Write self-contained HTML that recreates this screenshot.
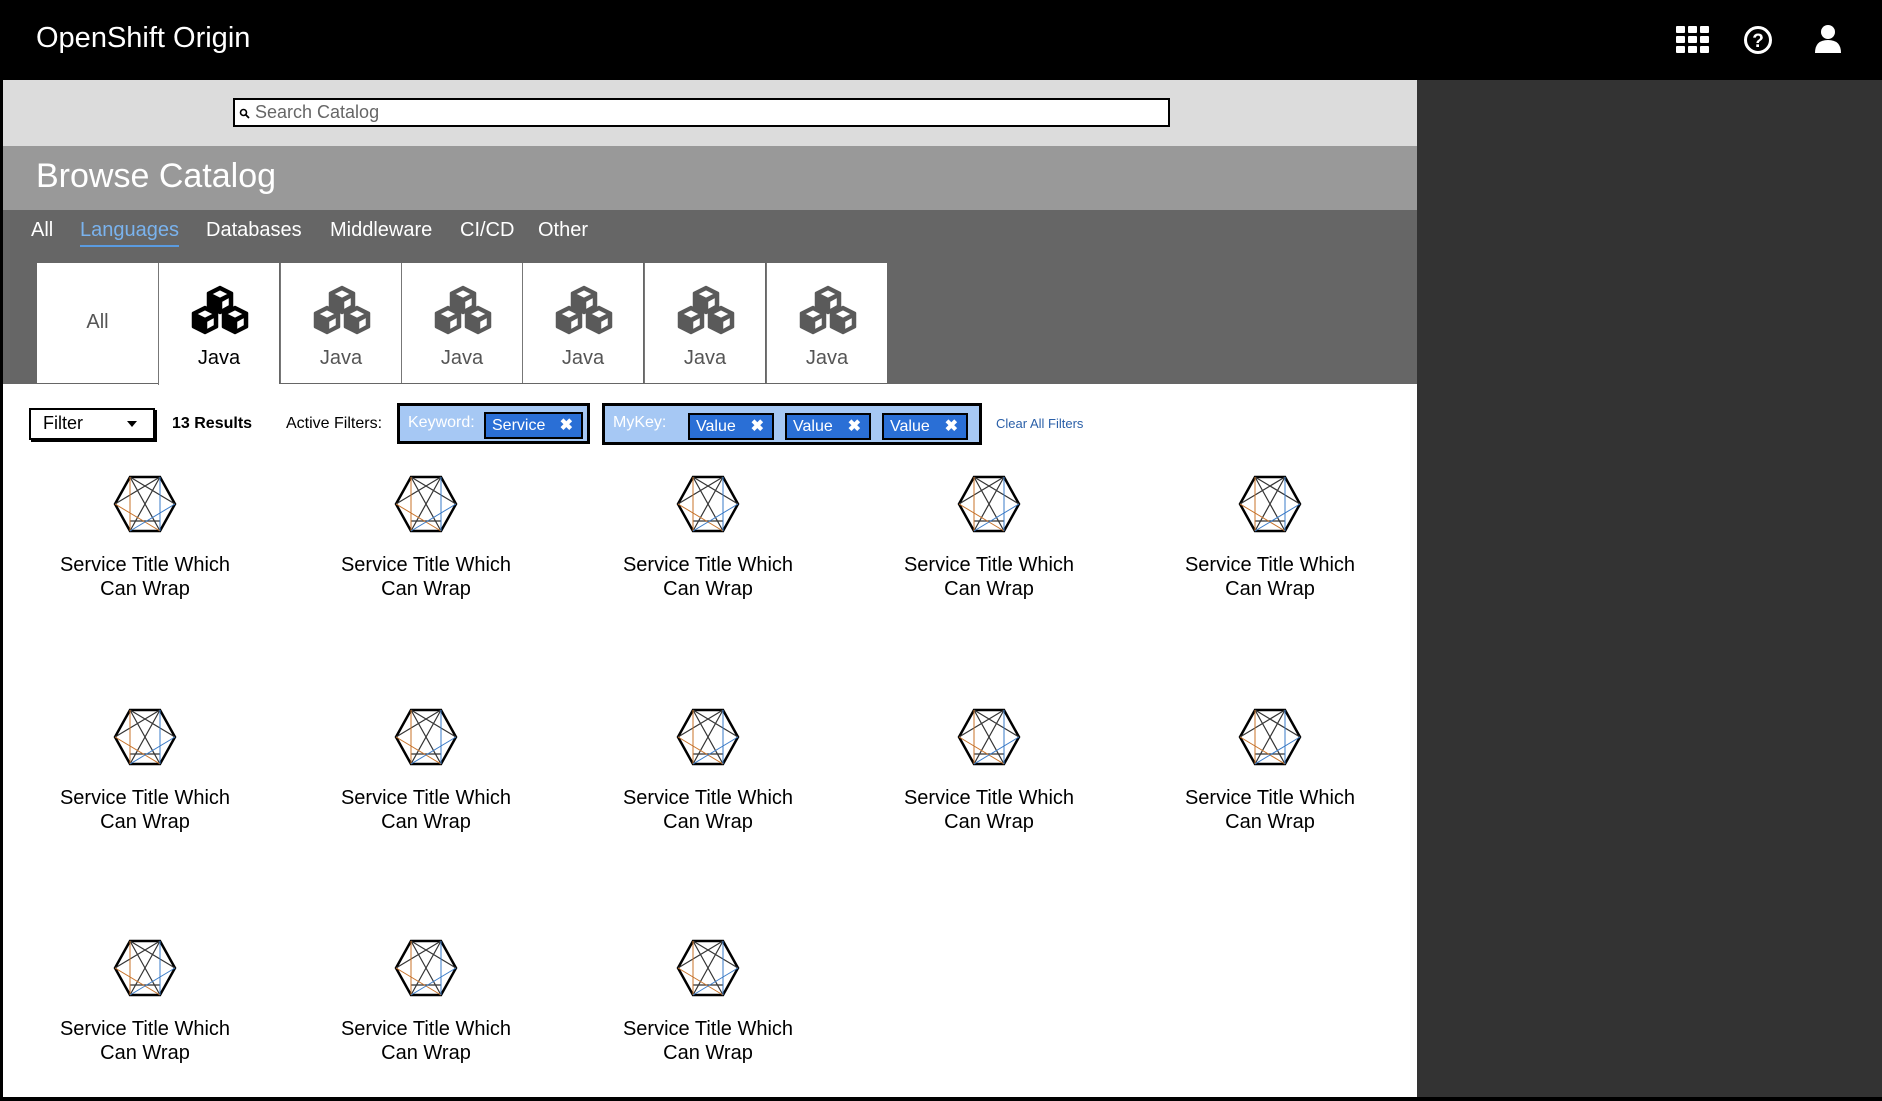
<!DOCTYPE html>
<html><head><meta charset="utf-8"><style>
*{margin:0;padding:0;box-sizing:border-box}
body{width:1882px;height:1101px;background:#000;position:relative;overflow:hidden;font-family:"Liberation Sans",sans-serif}
.a{position:absolute}
.t{color:#fff;font-size:20px;top:219px}
.tile{position:absolute;top:263px;width:121px;height:120px;background:#fff;border-left:1px solid #777;text-align:center;font-size:20px;color:#555}
.tile svg{position:absolute;left:30px;top:22px}
.tile span{position:absolute;left:0;right:0;top:84px}
.card{position:absolute;width:240px;text-align:center;font-size:20px;line-height:24px;color:#000}
.card svg{display:block;margin:0 auto 20px}
.chip{position:absolute;top:412px;height:27px;background:#2a6fd6;border:2px solid #000;color:#fff;font-size:16px;line-height:23px;padding-left:6px}
.chip b{position:absolute;right:8px;top:0;font-size:16px}
</style></head><body>
<div class="a" style="left:36px;top:22px;color:#fff;font-size:29px">OpenShift Origin</div>
<svg class="a" style="left:1676px;top:26px" width="34" height="28"><g fill="#fff"><rect x="0" y="0" width="9" height="7" rx="1"/><rect x="12" y="0" width="9" height="7" rx="1"/><rect x="24" y="0" width="9" height="7" rx="1"/><rect x="0" y="10" width="9" height="7" rx="1"/><rect x="12" y="10" width="9" height="7" rx="1"/><rect x="24" y="10" width="9" height="7" rx="1"/><rect x="0" y="20" width="9" height="7" rx="1"/><rect x="12" y="20" width="9" height="7" rx="1"/><rect x="24" y="20" width="9" height="7" rx="1"/></g></svg>
<svg class="a" style="left:1743px;top:25px" width="30" height="30"><circle cx="15" cy="15" r="12.5" fill="none" stroke="#fff" stroke-width="3"/><text x="15" y="22" text-anchor="middle" fill="#fff" font-size="19" font-weight="bold" font-family="Liberation Sans">?</text></svg>
<svg class="a" style="left:1814px;top:24px" width="28" height="30"><circle cx="14" cy="8" r="7" fill="#fff"/><path d="M1 29 Q1 16 14 16 Q27 16 27 29 Z" fill="#fff"/></svg>
<div class="a" style="left:1417px;top:80px;width:465px;height:1017px;background:#333"></div>
<div class="a" style="left:3px;top:80px;width:1414px;height:1017px;background:#fff"></div>
<div class="a" style="left:3px;top:80px;width:1414px;height:66px;background:#dcdcdc"></div>
<div class="a" style="left:233px;top:98px;width:937px;height:29px;background:#fff;border:2px solid #000;font-size:18px;color:#666;line-height:24px;padding-left:20px">Search Catalog</div>
<svg class="a" style="left:239px;top:108px" width="11" height="11"><circle cx="4.5" cy="4.5" r="3" fill="none" stroke="#000" stroke-width="1.6"/><path d="M6.5 6.5 L10 10" stroke="#000" stroke-width="1.8"/></svg>
<div class="a" style="left:3px;top:146px;width:1414px;height:64px;background:#999"></div>
<div class="a" style="left:36px;top:157px;color:#fff;font-size:34px">Browse Catalog</div>
<div class="a" style="left:3px;top:210px;width:1414px;height:174px;background:#666"></div>
<div class="a t" style="left:31px">All</div>
<div class="a t" style="left:80px;color:#7ab3ee;border-bottom:2px solid #5a9be0;padding-bottom:3px">Languages</div>
<div class="a t" style="left:206px">Databases</div>
<div class="a t" style="left:330px">Middleware</div>
<div class="a t" style="left:460px">CI/CD</div>
<div class="a t" style="left:538px">Other</div>
<div class="tile" style="left:37px;border-left:none"><span style="top:48px">All</span></div>
<div id="tiles"></div>
<div class="a" style="left:29px;top:408px;width:126px;height:32px;border:2px solid #000;box-shadow:2px 2px 0 #000;font-size:18px;line-height:27px;padding-left:12px">Filter</div>
<div class="a" style="left:127px;top:421px;width:0;height:0;border-left:5px solid transparent;border-right:5px solid transparent;border-top:6px solid #000"></div>
<div class="a" style="left:172px;top:415px;font-size:16px;font-weight:bold">13 Results</div>
<div class="a" style="left:286px;top:415px;font-size:16px">Active Filters:</div>
<div class="a" style="left:397px;top:403px;width:193px;height:41px;background:#a6c8f4;border:3px solid #000"></div>
<div class="a" style="left:408px;top:414px;font-size:16px;color:#fff">Keyword:</div>
<div class="chip" style="left:484px;width:99px">Service<b>✖</b></div>
<div class="a" style="left:602px;top:403px;width:380px;height:42px;background:#a6c8f4;border:3px solid #000"></div>
<div class="a" style="left:613px;top:414px;font-size:16px;color:#fff">MyKey:</div>
<div class="chip" style="left:688px;width:86px;top:413px">Value<b>✖</b></div>
<div class="chip" style="left:785px;width:86px;top:413px">Value<b>✖</b></div>
<div class="chip" style="left:882px;width:86px;top:413px">Value<b>✖</b></div>
<div class="a" style="left:996px;top:416px;font-size:13px;color:#2a5fa8">Clear All Filters</div>
<div id="cards"></div>
<script>
function cube(col){return '<svg width="62" height="52" viewBox="0 0 62 52"><g stroke="'+col+'" stroke-width="2.5" stroke-linejoin="round"><path d="M31 2 L43 8 L43 22 L31 28 L19 22 L19 8Z" fill="'+col+'"/><path d="M31 4 L41 9 L31 14 L21 9Z" fill="#fff"/><path d="M32 16 L41 11 L41 21 L32 26Z" fill="#fff"/><path d="M16 22 L28 28 L28 42 L16 48 L4 42 L4 28Z" fill="'+col+'"/><path d="M16 24 L26 29 L16 34 L6 29Z" fill="#fff"/><path d="M17 36 L26 31 L26 41 L17 46Z" fill="#fff"/><path d="M46 22 L58 28 L58 42 L46 48 L34 42 L34 28Z" fill="'+col+'"/><path d="M46 24 L56 29 L46 34 L36 29Z" fill="#fff"/><path d="M47 36 L56 31 L56 41 L47 46Z" fill="#fff"/></g></svg>';}
var h='<div class="tile" style="left:158px;height:122px;color:#000">'+cube('#000')+'<span>Java</span></div>';
[280,401,522,644,766].forEach(function(x){h+='<div class="tile" style="left:'+x+'px">'+cube('#5a5a5a')+'<span>Java</span></div>'});
document.getElementById('tiles').innerHTML=h;
var hex='<svg width="64" height="58" viewBox="0 0 64 58"><g fill="none"><path d="M2 29 L17 2 L47 2 L62 29 L47 56 L17 56Z" stroke="#000" stroke-width="2.5"/><path d="M17 2 L47 56 M47 2 L17 56 M2 29 L47 2 M17 2 L62 29 M17 46 L47 46" stroke="#333" stroke-width="1.2"/><path d="M17 2 L17 56 M2 29 L47 56" stroke="#c8732a" stroke-width="1"/><path d="M47 2 L47 56 M62 29 L17 56" stroke="#3a7bc8" stroke-width="1"/></g></svg>';
var c='',cx=[145,426,708,989,1270],ys=[475,708,939];
for(var i=0;i<13;i++){var x=cx[i%5],y=ys[Math.floor(i/5)];c+='<div class="card" style="left:'+(x-120)+'px;top:'+y+'px">'+hex+'Service Title Which<br>Can Wrap</div>'}
document.getElementById('cards').innerHTML=c;
</script>
</body></html>
